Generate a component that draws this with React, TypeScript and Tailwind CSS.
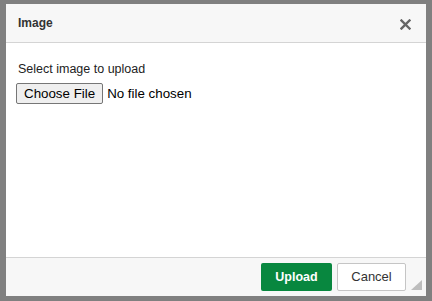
export default function App() {
  return (
    <div className="flex h-[301px] w-[432px] bg-[#808080] pb-[5px] pl-[6px] pr-[6px] pt-[4px] font-['Liberation_Sans',Arial,sans-serif] text-[#333]">
      <div className="relative flex flex-1 flex-col bg-white">
        <div className="flex h-[39px] items-center justify-between border-b border-[#d4d4d4] bg-[#f7f7f7] pl-[12px] pr-[15px]">
          <span className="text-[12px] font-bold leading-none">Image</span>
          <svg width="11" height="11" viewBox="0 0 11 11" className="mt-[2px]">
            <path d="M1.5 1.5 L9.5 9.5 M9.5 1.5 L1.5 9.5" stroke="#666" strokeWidth="2.4" strokeLinecap="square" />
          </svg>
        </div>

        <div className="flex-1 pl-[12px] pt-[19px]">
          <div className="text-[12.5px] leading-[15px] text-[#222]">Select image to upload</div>
          <div className="mt-[6px] flex items-center text-[13.33px] text-black">
            <button className="ml-[-2px] h-[21px] rounded-[2px] border border-[#767676] bg-[#efefef] px-[7px] leading-none">
              Choose File
            </button>
            <span className="ml-[4px]">No file chosen</span>
          </div>
        </div>

        <div className="flex h-[39px] items-center justify-end gap-[5px] border-t border-[#d4d4d4] bg-[#f7f7f7] pr-[20px]">
          <button className="h-[28px] w-[71px] rounded-[2px] bg-[#08873f] text-[12.5px] font-bold text-white">
            Upload
          </button>
          <button className="h-[28px] w-[69px] rounded-[2px] border border-[#c5c5c5] bg-white text-[13px] text-[#333]">
            Cancel
          </button>
        </div>

        <svg width="11" height="10" viewBox="0 0 11 10" className="absolute bottom-[6px] right-[4px]">
          <path d="M11 0 L11 10 L0 10 Z" fill="#bdbdbd" />
        </svg>
      </div>
    </div>
  )
}
